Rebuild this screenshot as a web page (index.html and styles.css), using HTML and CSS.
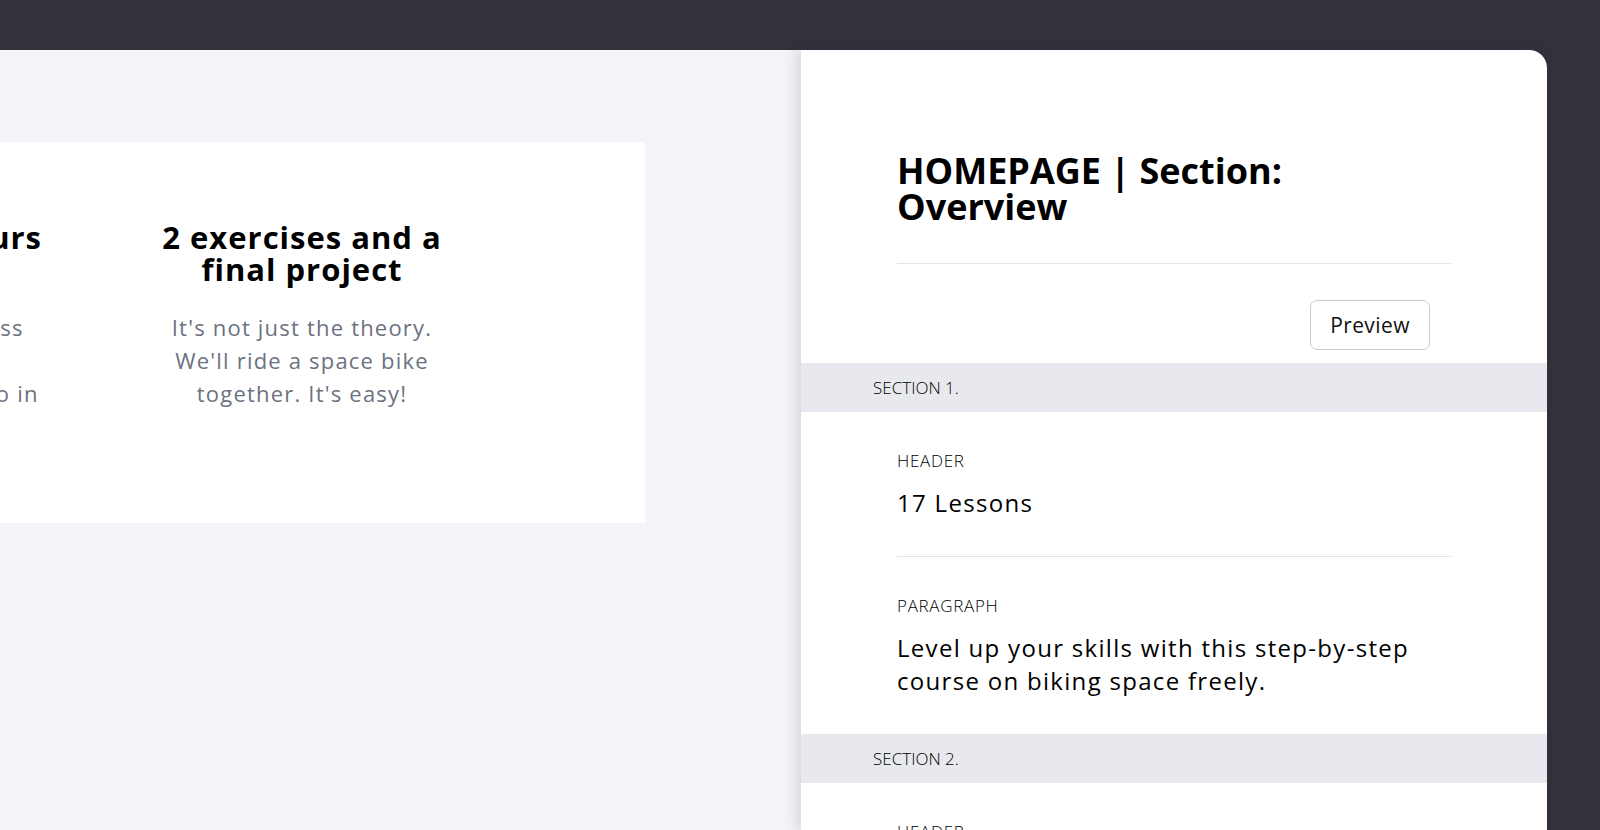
FILE: index.html
```html
<!DOCTYPE html>
<html lang="en">
<head>
<meta charset="utf-8">
<title>Course editor</title>
<link rel="stylesheet" href="styles.css">
</head>
<body>
<div class="app">
  <main class="canvas">
    <section class="features">
      <div class="feature">
        <h2 class="feature-title">Less than 3.5 hours<br>long</h2>
        <p class="feature-text">Short videos you discuss<br>with examples and<br>the steps you need to go in<br>the right direction.</p>
      </div>
      <div class="feature">
        <h2 class="feature-title">2 exercises and a final project</h2>
        <p class="feature-text">It's not just the theory. We'll ride a space bike together. It's easy!</p>
      </div>
    </section>
  </main>
  <aside class="editor">
    <div class="editor-head">
      <div class="title-wrap">
        <h1 class="editor-title">HOMEPAGE | Section: Overview</h1>
      </div>
      <div class="editor-actions">
        <button class="btn-preview" type="button">Preview</button>
      </div>
    </div>
    <div class="section-bar">SECTION 1.</div>
    <div class="fields">
      <div class="field">
        <div class="field-label">HEADER</div>
        <div class="field-value">17 Lessons</div>
      </div>
      <div class="field">
        <div class="field-label">PARAGRAPH</div>
        <div class="field-value">Level up your skills with this step-by-step course on biking space freely.</div>
      </div>
    </div>
    <div class="section-bar">SECTION 2.</div>
    <div class="fields">
      <div class="field">
        <div class="field-label">HEADER</div>
        <div class="field-value">Space bikes</div>
      </div>
    </div>
  </aside>
</div>
</body>
</html>
```

FILE: styles.css
```css
* { box-sizing: border-box; }
html, body {
  margin: 0;
  height: 830px;
  overflow: hidden;
}
body {
  background: #34313c;
  font-family: "Open Sans", "Noto Sans", sans-serif;
  color: #111;
}
.app {
  display: flex;
  padding-top: 50px;
  height: 830px;
}
.canvas {
  flex: 0 0 801px;
  background: #f3f4f7;
  padding-top: 92px;
  overflow: hidden;
}
.features {
  background: #fff;
  width: 1100px;
  height: 381px;
  margin-left: -455px;
  display: flex;
  justify-content: flex-end;
  gap: 110px;
  padding: 79px 193px 0 0;
}
.feature {
  flex: 0 0 300px;
  text-align: center;
}
.feature-title {
  margin: 0;
  font-size: 31px;
  line-height: 32px;
  font-weight: 700;
  color: #000;
  letter-spacing: 1px;
  white-space: nowrap;
}
.feature:last-child .feature-title { white-space: normal; }
.feature-text {
  margin: 26px 0 0;
  font-size: 22px;
  line-height: 33px;
  color: #6b7280;
  letter-spacing: 1.2px;
  white-space: nowrap;
}
.feature:last-child .feature-text { white-space: normal; }
.editor {
  flex: 0 0 746px;
  background: #fff;
  border-top-right-radius: 18px;
  box-shadow: -4px 0 14px rgba(30, 30, 50, 0.14);
  position: relative;
  z-index: 1;
}
.editor-head {
  padding: 103px 96px 13px;
}
.title-wrap {
  padding-bottom: 38px;
  border-bottom: 1px solid #e3e4e8;
}
.editor-title {
  margin: 0;
  max-width: 440px;
  font-size: 36px;
  line-height: 36px;
  font-weight: 700;
  color: #000;
}
.editor-actions {
  display: flex;
  justify-content: flex-end;
  padding: 36px 21px 0 0;
}
.btn-preview {
  width: 120px;
  height: 50px;
  border: 1px solid #c9cbd1;
  border-radius: 7px;
  background: #fff;
  font-family: inherit;
  font-size: 21px;
  letter-spacing: 0.4px;
  color: #111;
}
.section-bar {
  background: #e8e9ee;
  height: 49px;
  display: flex;
  align-items: center;
  padding-left: 72px;
  font-size: 17px;
  font-weight: 300;
  color: #000;
}
.fields {
  padding: 0 96px;
}
.field {
  padding: 37px 0;
}
.field + .field {
  border-top: 1px solid #e3e4e8;
}
.field-label {
  font-size: 17px;
  line-height: 24px;
  font-weight: 300;
  letter-spacing: 0.7px;
  color: #000;
}
.field-value {
  margin-top: 13px;
  font-size: 24px;
  line-height: 33px;
  font-weight: 500;
  letter-spacing: 1.3px;
  color: #000;
}
```
